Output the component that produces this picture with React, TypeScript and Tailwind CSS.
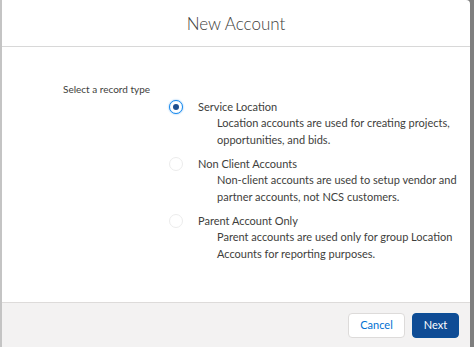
import React, { useState } from "react"

const options = [
  {
    id: "service",
    label: "Service Location",
    desc: ["Location accounts are used for creating projects,", "opportunities, and bids."],
  },
  {
    id: "nonclient",
    label: "Non Client Accounts",
    desc: ["Non-client accounts are used to setup vendor and", "partner accounts, not NCS customers."],
  },
  {
    id: "parent",
    label: "Parent Account Only",
    desc: ["Parent accounts are used only for group Location", "Accounts for reporting purposes."],
  },
]

const App = () => {
  const [selected, setSelected] = useState("service")

  return (
    <div
      className="flex h-[347px] w-[474px] bg-[#7f7f7f] text-[#3e3e3c]"
      style={{ fontFamily: "Lato, 'Open Sans', sans-serif" }}
    >
      <div className="w-[2px] bg-[#c4c4c4]" />
      <div className="flex w-[468px] flex-col overflow-hidden rounded-tr-[4px] bg-white">
        <div className="flex h-[47px] items-center justify-center border-b border-[#d8d8d8] pt-[1px]">
          <h2 className="text-[17px] font-light text-[#3e3e3c]">New Account</h2>
        </div>
        <div className="flex-1 pt-[36px]">
          <div className="pl-[61px] text-[10px] leading-[12px] text-[#3e3e3c]">Select a record type</div>
          <div className="mt-[4px] flex flex-col pl-[167px]">
            {options.map((o) => (
              <label key={o.id} className="flex h-[57px] cursor-pointer items-start" onClick={() => setSelected(o.id)}>
                <span
                  className={
                    selected === o.id
                      ? "mt-[1px] flex h-[14px] w-[14px] shrink-0 items-center justify-center rounded-full border border-[#1589ee] bg-white shadow-[0_0_2px_#6fb3f0]"
                      : "mt-[1px] flex h-[14px] w-[14px] shrink-0 items-center justify-center rounded-full border border-[#ececec] bg-white"
                  }
                >
                  {selected === o.id && <span className="h-[6px] w-[6px] rounded-full bg-[#1d4f8f]" />}
                </span>
                <div className="ml-[15px] flex flex-col whitespace-nowrap">
                  <span className="text-[11px] leading-[16px]">{o.label}</span>
                  <div className="pl-[19px] text-[11px] leading-[16.5px]">
                    {o.desc.map((d) => (
                      <div key={d}>{d}</div>
                    ))}
                  </div>
                </div>
              </label>
            ))}
          </div>
        </div>
        <div className="flex h-[45px] items-center justify-end gap-[7px] border-t border-[#dddbda] bg-[#f3f2f2] pr-[11px]">
          <button className="h-[25px] w-[57px] rounded-[4px] border border-[#dddbda] bg-white text-[11px] text-[#0070d2]">
            Cancel
          </button>
          <button className="h-[25px] w-[47px] rounded-[4px] border border-[#0b4f98] bg-[#0f4c95] text-[11px] text-white">
            Next
          </button>
        </div>
      </div>
      <div className="w-[4px]" />
    </div>
  )
}

export default App
